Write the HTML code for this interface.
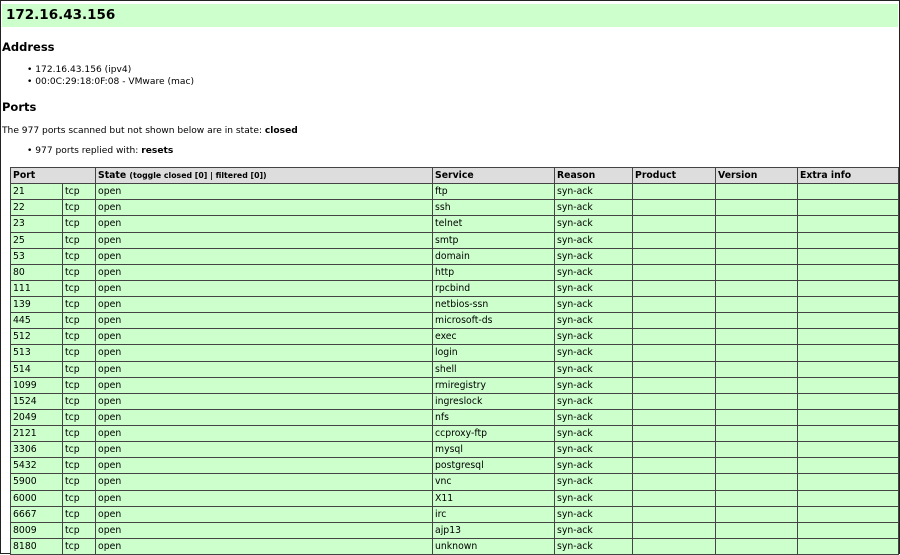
<!DOCTYPE html>
<html><head><style>
body{margin:0;width:900px;height:554px;overflow:hidden;background:#fff;font-family:"DejaVu Sans","Liberation Sans",sans-serif;color:#000;position:relative}
.frame{position:absolute;left:0;top:0;width:898px;height:552px;border:1px solid #222;border-right:2px solid #222}
.hdr{position:absolute;left:2px;top:4px;width:896px;height:23px;background:#ccffcc;font-weight:bold;font-size:13.5px;line-height:23px;padding-left:4px;box-sizing:border-box}
.t{position:absolute;white-space:nowrap}
h2{margin:0;position:absolute;font-size:11.5px;font-weight:bold}
.s{font-size:9.1px}
table{position:absolute;left:10px;top:167px;border-collapse:collapse;table-layout:fixed;width:888px;font-size:9.3px}
td,th{border:1px solid #444;height:15.14px;padding:0 2px;text-align:left;white-space:nowrap;overflow:hidden;line-height:15px}
th{background:#ddd;font-weight:bold}
td{background:#ccffcc}
th .sm{font-size:7.8px}
</style></head><body>
<div class="frame"></div>
<div class="hdr">172.16.43.156</div>
<h2 style="left:2px;top:40px">Address</h2>
<div class="t s" style="left:27px;top:65px">• 172.16.43.156 (ipv4)</div>
<div class="t s" style="left:27px;top:77px">• 00:0C:29:18:0F:08 - VMware (mac)</div>
<h2 style="left:2px;top:100px">Ports</h2>
<div class="t s" style="left:2px;top:126px">The 977 ports scanned but not shown below are in state: <b>closed</b></div>
<div class="t s" style="left:27px;top:146px">• 977 ports replied with: <b>resets</b></div>
<table>
<colgroup><col style="width:52px"><col style="width:33px"><col style="width:337px"><col style="width:122px"><col style="width:78px"><col style="width:83px"><col style="width:82px"><col style="width:101px"></colgroup>
<tr><th colspan="2">Port</th><th>State <span class="sm">(toggle closed [0] | filtered [0])</span></th><th>Service</th><th>Reason</th><th>Product</th><th>Version</th><th>Extra info</th></tr>
<tr><td>21</td><td>tcp</td><td>open</td><td>ftp</td><td>syn-ack</td><td></td><td></td><td></td></tr>
<tr><td>22</td><td>tcp</td><td>open</td><td>ssh</td><td>syn-ack</td><td></td><td></td><td></td></tr>
<tr><td>23</td><td>tcp</td><td>open</td><td>telnet</td><td>syn-ack</td><td></td><td></td><td></td></tr>
<tr><td>25</td><td>tcp</td><td>open</td><td>smtp</td><td>syn-ack</td><td></td><td></td><td></td></tr>
<tr><td>53</td><td>tcp</td><td>open</td><td>domain</td><td>syn-ack</td><td></td><td></td><td></td></tr>
<tr><td>80</td><td>tcp</td><td>open</td><td>http</td><td>syn-ack</td><td></td><td></td><td></td></tr>
<tr><td>111</td><td>tcp</td><td>open</td><td>rpcbind</td><td>syn-ack</td><td></td><td></td><td></td></tr>
<tr><td>139</td><td>tcp</td><td>open</td><td>netbios-ssn</td><td>syn-ack</td><td></td><td></td><td></td></tr>
<tr><td>445</td><td>tcp</td><td>open</td><td>microsoft-ds</td><td>syn-ack</td><td></td><td></td><td></td></tr>
<tr><td>512</td><td>tcp</td><td>open</td><td>exec</td><td>syn-ack</td><td></td><td></td><td></td></tr>
<tr><td>513</td><td>tcp</td><td>open</td><td>login</td><td>syn-ack</td><td></td><td></td><td></td></tr>
<tr><td>514</td><td>tcp</td><td>open</td><td>shell</td><td>syn-ack</td><td></td><td></td><td></td></tr>
<tr><td>1099</td><td>tcp</td><td>open</td><td>rmiregistry</td><td>syn-ack</td><td></td><td></td><td></td></tr>
<tr><td>1524</td><td>tcp</td><td>open</td><td>ingreslock</td><td>syn-ack</td><td></td><td></td><td></td></tr>
<tr><td>2049</td><td>tcp</td><td>open</td><td>nfs</td><td>syn-ack</td><td></td><td></td><td></td></tr>
<tr><td>2121</td><td>tcp</td><td>open</td><td>ccproxy-ftp</td><td>syn-ack</td><td></td><td></td><td></td></tr>
<tr><td>3306</td><td>tcp</td><td>open</td><td>mysql</td><td>syn-ack</td><td></td><td></td><td></td></tr>
<tr><td>5432</td><td>tcp</td><td>open</td><td>postgresql</td><td>syn-ack</td><td></td><td></td><td></td></tr>
<tr><td>5900</td><td>tcp</td><td>open</td><td>vnc</td><td>syn-ack</td><td></td><td></td><td></td></tr>
<tr><td>6000</td><td>tcp</td><td>open</td><td>X11</td><td>syn-ack</td><td></td><td></td><td></td></tr>
<tr><td>6667</td><td>tcp</td><td>open</td><td>irc</td><td>syn-ack</td><td></td><td></td><td></td></tr>
<tr><td>8009</td><td>tcp</td><td>open</td><td>ajp13</td><td>syn-ack</td><td></td><td></td><td></td></tr>
<tr><td>8180</td><td>tcp</td><td>open</td><td>unknown</td><td>syn-ack</td><td></td><td></td><td></td></tr>
</table>
</body></html>
